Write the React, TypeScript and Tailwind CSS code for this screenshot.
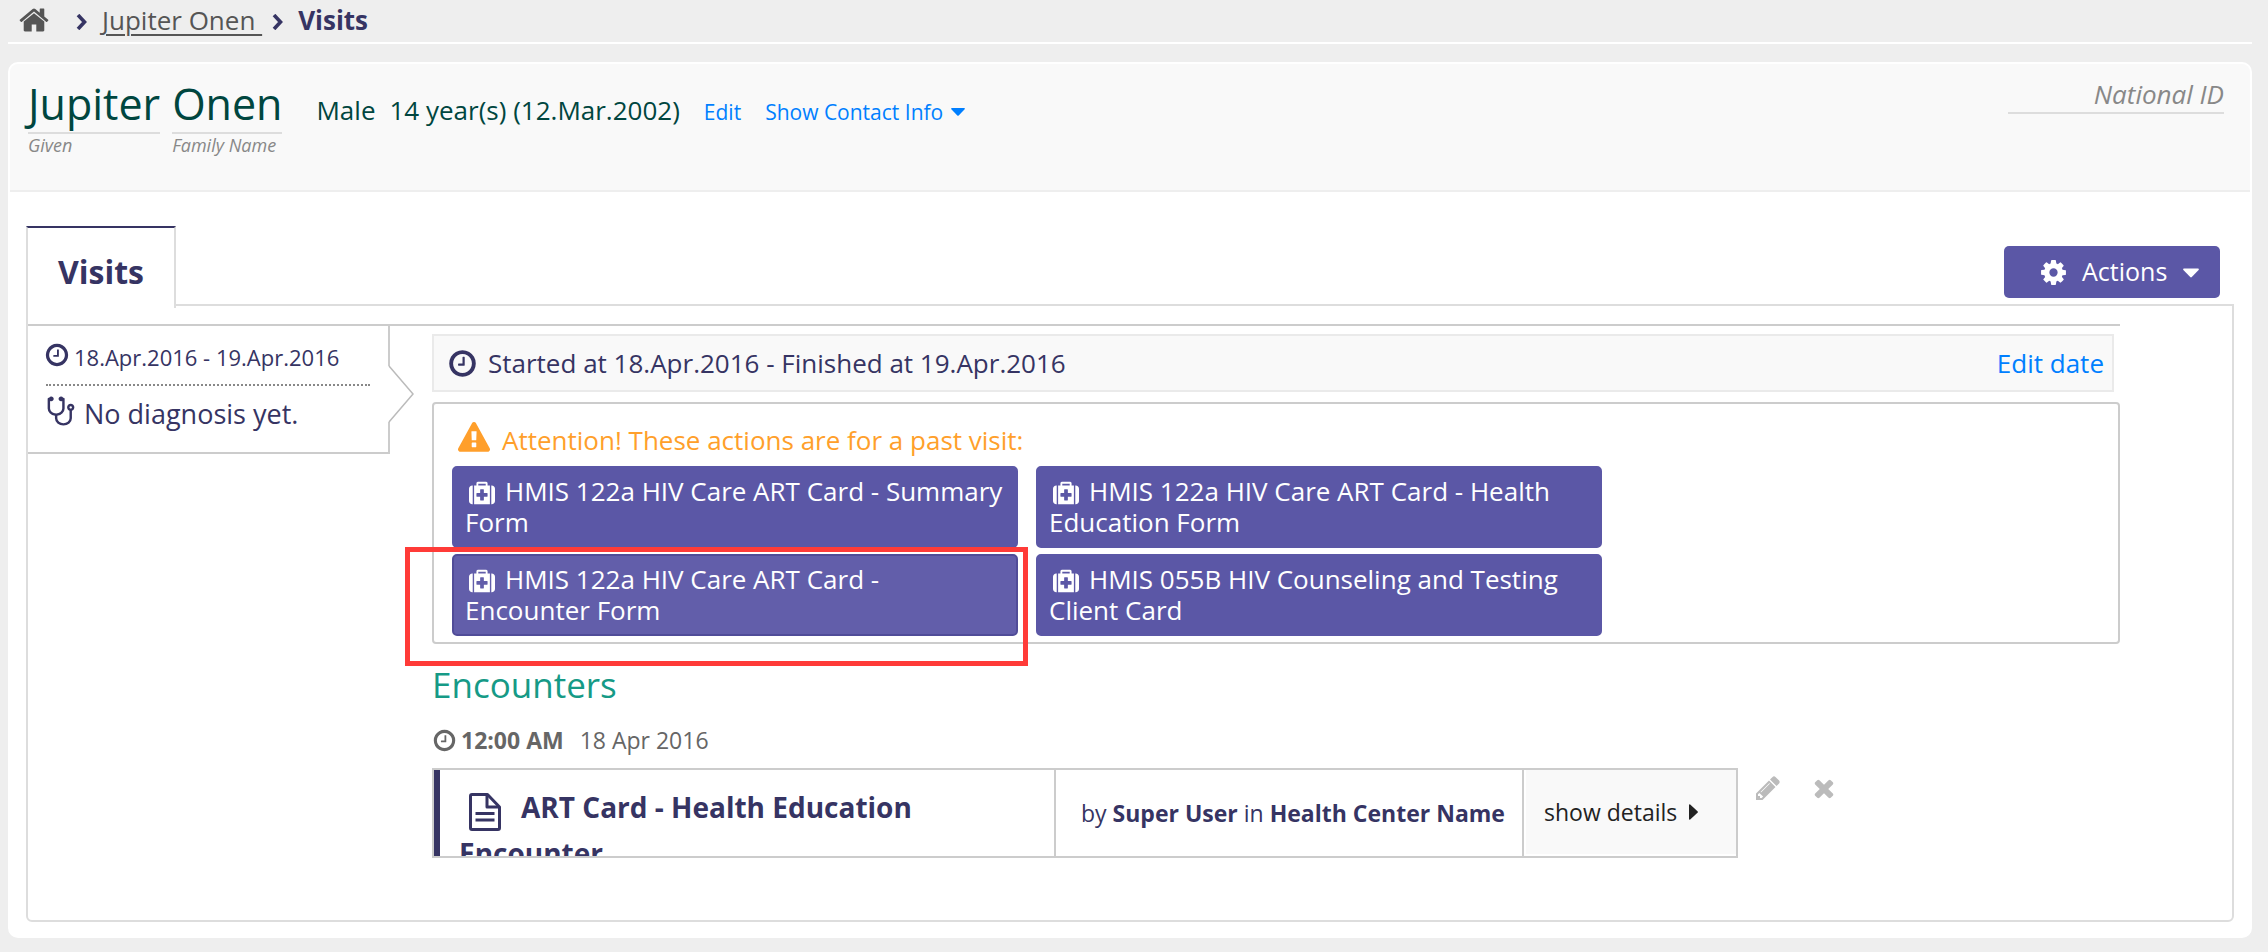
import React from "react";

const PATHS = {
  home: "M1472 992v480q0 26-19 45t-45 19h-384v-384h-256v384h-384q-26 0-45-19t-19-45v-480q0-1 .5-3t.5-3l575-474 575 474q1 2 1 6zm223-69l-62 74q-8 9-21 11h-3q-13 0-21-7l-692-577-692 577q-12 8-24 7-13-2-21-11l-62-74q-8-10-7-23.5t11-21.5l719-599q32-26 76-26t76 26l244 204v-195q0-14 9-23t23-9h192q14 0 23 9t9 23v408l219 182q10 8 11 21.5t-7 23.5z",
  clock:
    "M1024 544v448q0 14-9 23t-23 9h-320q-14 0-23-9t-9-23v-64q0-14 9-23t23-9h224v-352q0-14 9-23t23-9h64q14 0 23 9t9 23zm416 352q0-148-73-273t-198-198-273-73-273 73-198 198-73 273 73 273 198 198 273 73 273-73 198-198 73-273zm224 0q0 209-103 385.5t-279.5 279.5-385.5 103-385.5-103-279.5-279.5-103-385.5 103-385.5 279.5-279.5 385.5-103 385.5 103 279.5 279.5 103 385.5z",
  warning:
    "M1024 1375v-190q0-14-9.5-23.5t-22.5-9.5h-192q-13 0-22.5 9.5t-9.5 23.5v190q0 14 9.5 23.5t22.5 9.5h192q13 0 22.5-9.5t9.5-23.5zm-2-374l18-459q0-12-10-19-13-11-24-11h-220q-11 0-24 11-10 7-10 21l17 457q0 10 10 16.5t24 6.5h185q14 0 23.5-6.5t10.5-16.5zm-14-934l768 1408q35 63-2 126-17 29-46.5 46t-63.5 17h-1536q-34 0-63.5-17t-46.5-46q-37-63-2-126l768-1408q17-31 47-49t65-18 65 18 47 49z",
  pencil:
    "M491 1536l91-91-235-235-91 91v107h128v128h107zm523-928q0-22-22-22-10 0-17 7l-542 542q-7 7-7 17 0 22 22 22 10 0 17-7l542-542q7-7 7-17zm-54-192l416 416-832 832h-416v-416zm683 96q0 53-37 90l-166 166-416-416 166-165q36-38 90-38 53 0 91 38l235 234q37 39 37 91z",
  remove:
    "M1490 1322q0 40-28 68l-136 136q-28 28-68 28t-68-28l-294-294-294 294q-28 28-68 28t-68-28l-136-136q-28-28-28-68t28-68l294-294-294-294q-28-28-28-68t28-68l136-136q28-28 68-28t68 28l294 294 294-294q28-28 68-28t68 28l136 136q28 28 28 68t-28 68l-294 294 294 294q28 28 28 68z",
  medkit:
    "M1280 1120v-192q0-14-9-23t-23-9h-224v-224q0-14-9-23t-23-9h-192q-14 0-23 9t-9 23v224h-224q-14 0-23 9t-9 23v192q0 14 9 23t23 9h224v224q0 14 9 23t23 9h192q14 0 23-9t9-23v-224h224q14 0 23-9t9-23zm-640-736h512v-128h-512v128zm-384 0v1280h-32q-92 0-158-66t-66-158v-832q0-92 66-158t158-66h32zm1184 0v1280h-1088v-1280h160v-160q0-40 28-68t68-28h576q40 0 68 28t28 68v160h160zm352 224v832q0 92-66 158t-158 66h-32v-1280h32q92 0 158 66t66 158z",
  cog: "M1152 896q0-106-75-181t-181-75-181 75-75 181 75 181 181 75 181-75 75-181zm512-109v222q0 12-8 23t-20 13l-185 28q-19 54-39 91 35 50 107 138 10 12 10 25t-9 23q-27 37-99 108t-94 71q-12 0-26-9l-138-108q-44 23-91 38-16 136-29 186-7 28-36 28h-222q-14 0-24.5-8.5t-11.5-21.5l-28-184q-49-16-90-37l-141 107q-10 9-25 9-14 0-25-11-126-114-165-168-7-10-7-23 0-12 8-23 15-21 51-66.5t54-70.5q-27-50-41-99l-183-27q-13-2-21-12.5t-8-23.5v-222q0-12 8-23t19-13l186-28q14-46 39-92-40-57-107-138-10-12-10-24 0-10 9-23 26-36 98.5-107.5t94.5-71.5q13 0 26 10l138 107q44-23 91-38 16-136 29-186 7-28 36-28h222q14 0 24.5 8.5t11.5 21.5l28 184q49 16 90 37l142-107q9-9 24-9 13 0 25 10 129 119 165 170 7 8 7 22 0 12-8 23-15 21-51 66.5t-54 70.5q26 50 41 98l183 28q13 2 21 12.5t8 23.5z",
  stethoscope:
    "M1472 704q0-26-19-45t-45-19-45 19-19 45 19 45 45 19 45-19 19-45zm128 0q0 62-35.5 111t-92.5 70v395q0 159-131.5 271.5t-316.5 112.5-316.5-112.5-131.5-271.5v-132q-164-20-274-128t-110-252v-512q0-26 19-45t45-19q6 0 16 2 17-30 47-48t65-18q53 0 90.5 37.5t37.5 90.5-37.5 90.5-90.5 37.5q-33 0-64-18v402q0 106 94 181t226 75 226-75 94-181v-402q-31 18-64 18-53 0-90.5-37.5t-37.5-90.5 37.5-90.5 90.5-37.5q35 0 65 18t47 48q10-2 16-2 26 0 45 19t19 45v512q0 144-110 252t-274 128v132q0 106 94 181t226 75 226-75 94-181v-395q-57-21-92.5-70t-35.5-111q0-80 56-136t136-56 136 56 56 136z",
};

function Icon({ name, className }: { name: keyof typeof PATHS; className: string }) {
  return (
    <svg viewBox="0 0 1792 1792" fill="currentColor" aria-hidden="true" className={className}>
      <path d={PATHS[name]} />
    </svg>
  );
}

function CaretDown({ className }: { className: string }) {
  return (
    <svg viewBox="0 0 16 9" fill="currentColor" aria-hidden="true" className={className}>
      <path d="M1 0h14q1.400 .2 .6 1.400L8.800 8.500q-.8 .8-1.600 0L.4 1.400Q-.4 .2 1 0z" />
    </svg>
  );
}

function Chevron() {
  return (
    <svg viewBox="0 0 12 16" fill="none" stroke="currentColor" strokeWidth="3.600" aria-hidden="true" className="mt-1 h-4 w-3 shrink-0 text-[#363463]">
      <path d="M2 1 8.500 8 2 15" />
    </svg>
  );
}

function DocumentIcon({ className }: { className: string }) {
  return (
    <svg viewBox="0 0 32 38" fill="none" stroke="currentColor" strokeWidth="3" strokeLinejoin="round" aria-hidden="true" className={className}>
      <path d="M4 1.500h14.500L30.500 14v21q0 1.500-1.500 1.500H3q-1.500 0-1.500-1.500V3q0-1.500 1.500-1.500z" />
      <path d="M18 2v12h12" />
      <path d="M6.500 20.500h19M6.500 27h19" />
    </svg>
  );
}

const ACTIONS = [
  { label: "HMIS 122a HIV Care ART Card - Summary Form", marked: false },
  { label: "HMIS 122a HIV Care ART Card - Health Education Form", marked: false },
  { label: "HMIS 122a HIV Care ART Card - Encounter Form", marked: true },
  { label: "HMIS 055B HIV Counseling and Testing Client Card", marked: false },
];

function ActionButton({ label, marked }: { label: string; marked: boolean }) {
  return (
    <div className="relative">
      <button
        type="button"
        className={
          marked
            ? "block h-[82px] w-full rounded-[5px] border-2 border-[#504c98] bg-[#625eaa] px-[11px] text-left text-[26px] leading-[31px] text-white"
            : "block h-[82px] w-full rounded-[5px] border-2 border-[#5b57a6] bg-[#5b57a6] px-[11px] text-left text-[26px] leading-[31px] text-white"
        }
      >
        <Icon name="medkit" className="mr-2.5 ml-1 inline-block size-[26px] align-[-5px]" />
        {label}
      </button>
      {marked && (
        <div className="pointer-events-none absolute -top-[7px] -right-[10px] -bottom-[30px] -left-[47px] border-[5px] border-[#ff3b38]" />
      )}
    </div>
  );
}

export default function App() {
  return (
    <div className="min-h-screen bg-[#eeeeee] pr-4 pb-3.5 pl-2 font-['Open_Sans','Noto_Sans',sans-serif] text-[#363463]">
      <nav aria-label="Breadcrumb" className="flex h-11 items-center border-b-2 border-white pb-0.5 pl-2.5 text-[26px] leading-9">
        <a href="#home" aria-label="Home" className="mr-[26px] text-[#555555]">
          <Icon name="home" className="size-8" />
        </a>
        <Chevron />
        <a href="#patient" className="mr-2.5 ml-3.5 whitespace-pre text-[#555555] underline decoration-2 underline-offset-4">
          {"Jupiter Onen "}
        </a>
        <Chevron />
        <span className="ml-3.5 font-bold">Visits</span>
      </nav>

      <div className="mt-[18px] rounded-[10px] border-2 border-white bg-white">
        <header className="flex h-[128px] items-start rounded-t-lg border-b-2 border-[#eeeeee] bg-[#f9f9f9] pr-[26px] pl-[18px]">
          <h1 className="flex gap-3 pt-3 text-[43px] leading-[56px] text-[#00463f]">
            <span>
              <span className="block border-b-2 border-[#dddddd]">Jupiter</span>
              <em className="block text-lg leading-[22px] text-[#888888]">Given</em>
            </span>
            <span>
              <span className="block border-b-2 border-[#dddddd]">Onen</span>
              <em className="block text-lg leading-[22px] text-[#888888]">Family Name</em>
            </span>
          </h1>
          <div className="ml-[34px] flex items-baseline pt-7 text-[26px] leading-9 text-[#00463f]">
            <span>Male</span>
            <span className="ml-3.5">14 year(s) (12.Mar.2002)</span>
            <a href="#edit" className="ml-6 text-[21px] text-[#007fff]">Edit</a>
            <button type="button" className="ml-6 flex items-center gap-2 text-[21px] text-[#007fff]">
              Show Contact Info
              <CaretDown className="h-2 w-3.5" />
            </button>
          </div>
          <div className="ml-auto w-[216px] border-b-2 border-[#dddddd] pt-3 text-right text-[26px] leading-9 text-[#888888] italic">
            National ID
          </div>
        </header>

        <main className="px-4 pt-[34px] pb-3.5">
          <div className="flex items-start">
            <div role="tablist" className="z-10 -mb-1 flex">
              <button
                type="button"
                role="tab"
                aria-selected="true"
                className="h-[82px] w-[150px] border-x-2 border-t-2 border-x-[#dddddd] border-t-[#363463] bg-white pt-2 text-[32px] leading-[44px] font-bold"
              >
                Visits
              </button>
            </div>
            <button type="button" className="mt-5 mr-3.5 ml-auto flex h-[52px] w-[216px] items-center rounded-[5px] bg-[#5b57a6] pl-[35px] text-[25px] text-white">
              <Icon name="cog" className="mr-3.5 size-[29px]" />
              Actions
              <CaretDown className="mt-0.5 ml-4 h-[10px] w-4" />
            </button>
          </div>

          <section aria-label="Visits" className="rounded-b-[6px] border-2 border-[#dddddd] pt-[18px] pr-28 pb-[62px]">
            <div className="flex items-start border-t-2 border-[#cccccc]">
              <div className="relative h-[128px] w-[362px] shrink-0 border-r-2 border-b-2 border-[#cccccc] px-[18px] pt-1">
                <div className="flex h-[56px] items-center border-b-2 border-dotted border-[#888888] text-[22px]">
                  <Icon name="clock" className="mr-1 mb-1 -ml-0.5 size-[26px]" />
                  18.Apr.2016 - 19.Apr.2016
                </div>
                <div className="flex items-start pt-2 text-[27px] leading-10">
                  <Icon name="stethoscope" className="mr-1.5 -ml-0.5 size-[34px]" />
                  No diagnosis yet.
                </div>
                <svg viewBox="0 0 26 58" fill="#ffffff" aria-hidden="true" className="absolute top-[39px] -right-[26px] h-[58px] w-[26px]">
                  <path d="M0 1v56h2L25 29 2 1z" />
                  <path d="M1 1 25 29 1 57" fill="none" stroke="#bbbbbb" strokeWidth="1.500" />
                </svg>
              </div>

              <div className="min-w-0 flex-1 pt-2 pl-[42px]">
                <div className="mr-1.5 flex h-[58px] items-center border-2 border-[#eaeaea] bg-[#f9f9f9] pr-2 pl-[13px] text-[26px]">
                  <Icon name="clock" className="mr-2.5 size-[31px]" />
                  <span>Started at 18.Apr.2016 - Finished at 19.Apr.2016</span>
                  <a href="#edit-date" className="ml-auto text-[#007fff]">Edit date</a>
                </div>

                <div className="mt-2.5 rounded border-2 border-[#cccccc] px-[18px] pt-[18px] pb-1.5">
                  <div className="flex h-11 items-start pl-1.5 text-[26px] leading-9 text-[#ff9f2b]">
                    <Icon name="warning" className="mr-3 size-8" />
                    Attention! These actions are for a past visit:
                  </div>
                  <div className="grid w-[1150px] grid-cols-2 gap-x-[18px] gap-y-1.5">
                    {ACTIONS.map((action) => (
                      <ActionButton key={action.label} {...action} />
                    ))}
                  </div>
                </div>

                <h2 className="pt-4 text-[35px] leading-[50px] text-[#169a86]">Encounters</h2>
                <div className="flex items-center pt-3 text-[23px] leading-9 text-[#666666]">
                  <Icon name="clock" className="mr-1 size-[25px]" />
                  <strong>12:00 AM</strong>
                  <span className="ml-4">18 Apr 2016</span>
                </div>

                <div className="mt-2.5 flex items-start">
                  <div className="flex h-[90px] w-[1306px] border-2 border-[#cccccc] text-[23px] leading-9">
                    <h3 className="w-[622px] overflow-hidden border-r-2 border-l-[6px] border-r-[#cccccc] border-l-[#363463] pt-3.5 pr-20 pl-[19px] text-[28px] leading-[46px] font-bold">
                      <DocumentIcon className="mt-[9px] mr-5 -mb-2 ml-2.5 inline-block h-[38px] w-8 align-top" />
                      ART Card - Health Education Encounter
                    </h3>
                    <div className="flex w-[468px] items-center border-r-2 border-[#cccccc] pl-[25px]">
                      <span className="whitespace-nowrap">
                        by <strong>Super User</strong> in <strong>Health Center Name</strong>
                      </span>
                    </div>
                    <button type="button" className="mb-0.5 ml-0.5 flex flex-1 items-center bg-[#f9f9f9] pl-[18px] text-[#222222]">
                      show details
                      <svg viewBox="0 0 9 16" fill="currentColor" aria-hidden="true" className="ml-3 h-4 w-[9px]">
                        <path d="M0 1Q.2-.2 1.200 .4L8.500 7.200q.8 .8 0 1.600L1.200 15.600Q.2 16.200 0 15z" />
                      </svg>
                    </button>
                  </div>
                  <button type="button" aria-label="Edit encounter" className="mt-1.5 ml-4 text-[#bbbbbb]">
                    <Icon name="pencil" className="size-7" />
                  </button>
                  <button type="button" aria-label="Delete encounter" className="mt-1.5 ml-7 text-[#bbbbbb]">
                    <Icon name="remove" className="size-7" />
                  </button>
                </div>
              </div>
            </div>
          </section>
        </main>
      </div>
    </div>
  );
}
